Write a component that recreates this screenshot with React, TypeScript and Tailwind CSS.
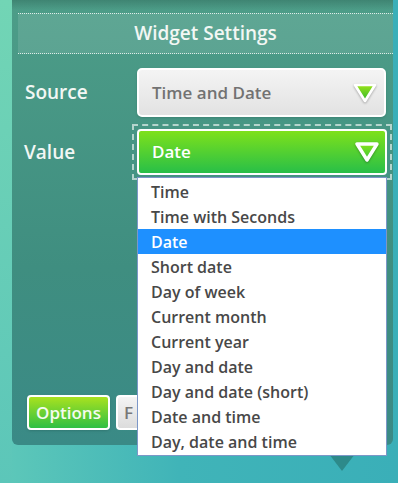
const options = [
  "Time",
  "Time with Seconds",
  "Date",
  "Short date",
  "Day of week",
  "Current month",
  "Current year",
  "Day and date",
  "Day and date (short)",
  "Date and time",
  "Day, date and time",
];

const Caret = ({ fill }: { fill: string }) => (
  <svg width="28" height="24" viewBox="0 0 28 24" className="drop-shadow-[0_1px_1px_rgba(0,0,0,0.3)]">
    <defs>
      <linearGradient id={fill} x1="0" y1="0" x2="0" y2="1">
        <stop offset="0" stopColor={fill === "src" ? "#9be41a" : "#86e21c"} />
        <stop offset="1" stopColor={fill === "src" ? "#2cb52e" : "#3cc83a"} />
      </linearGradient>
    </defs>
    <path
      d="M4 4 L24 4 L14 20 Z"
      fill={`url(#${fill})`}
      stroke="#ffffff"
      strokeWidth={fill === "src" ? 2.6 : 3.4}
      strokeLinejoin="round"
    />
  </svg>
);

export default function App() {
  return (
    <div className="relative h-[483px] w-[398px] overflow-hidden bg-[linear-gradient(to_right,#5ec8b9,#40b4b8_45%,#3aafb8)] font-['Open_Sans',sans-serif]">
      <div className="absolute inset-y-0 left-0 w-[12px] bg-[linear-gradient(to_bottom,#72d5b5,#5cc6b9)]" />
      <div className="relative ml-[12px] h-[445px] w-[381px] rounded-b-md bg-[linear-gradient(to_bottom,#4d9d88,#3f8e80_60%,#3a8a86)]">
        <div className="absolute inset-x-0 top-0 h-[10px] bg-[linear-gradient(to_bottom,rgba(20,60,50,0.25),transparent)]" />
        <div className="pt-[13px] pl-[6px]">
          <div className="flex h-[41px] items-center justify-center border-y border-dotted border-white/80 bg-white/10 text-[19px] font-semibold text-[#f2f7f4]">
            Widget Settings
          </div>
        </div>

        <div className="mt-[14px] flex items-center">
          <div className="w-[125px] pl-[13px] text-[19px] font-semibold text-[#f2f7f4]">Source</div>
          <div className="flex h-[49px] w-[249px] items-center justify-between rounded-[5px] border-2 border-white bg-[linear-gradient(to_bottom,#f4f4f4,#e2e2e2)] pl-[13px] pr-[5px] shadow-sm">
            <span className="text-[17px] font-semibold text-[#727272]">Time and Date</span>
            <Caret fill="src" />
          </div>
        </div>

        <div className="mt-[7px] flex items-center">
          <div className="w-[120px] pl-[12px] text-[19px] font-semibold text-[#f2f7f4]">Value</div>
          <div className="h-[56px] w-[260px] border-2 border-dashed border-white/60 p-[3px]">
            <div className="flex h-full w-full items-center justify-between rounded-[4px] border-2 border-white bg-[linear-gradient(to_bottom,#7ee11b,#28bf48)] pl-[13px] pr-[4px]">
              <span className="text-[17px] font-semibold text-white">Date</span>
              <Caret fill="val" />
            </div>
          </div>
        </div>

        <div className="absolute left-[15px] top-[395px] flex gap-[6px]">
          <div className="flex h-[35px] w-[83px] items-center justify-center rounded-[4px] border-2 border-white bg-[linear-gradient(to_bottom,#a9e21f,#2fbf44)] text-[17px] font-semibold text-[#f4fbef] shadow">
            Options
          </div>
          <div className="flex h-[35px] w-[24px] items-center overflow-hidden rounded-l-[4px] border-y-2 border-l-2 border-white bg-[linear-gradient(to_bottom,#f4f4f4,#dcdcdc)] pl-[6px] text-[17px] font-semibold text-[#777777]">
            F
          </div>
        </div>
      </div>

      <div className="absolute left-[329px] top-[454px] h-0 w-0 border-x-[13px] border-t-[17px] border-x-transparent border-t-[#2d8a8a]" />

      <div className="absolute left-[137px] top-[177px] w-[250px] border border-[#7c97c8] bg-white py-[1px]">
        {options.map((o) => (
          <div
            key={o}
            className={`flex h-[25px] items-center pl-[13px] text-[16px] font-semibold ${
              o === "Date" ? "bg-[#1e90ff] text-white" : "text-[#484848]"
            }`}
          >
            {o}
          </div>
        ))}
      </div>
    </div>
  );
}
